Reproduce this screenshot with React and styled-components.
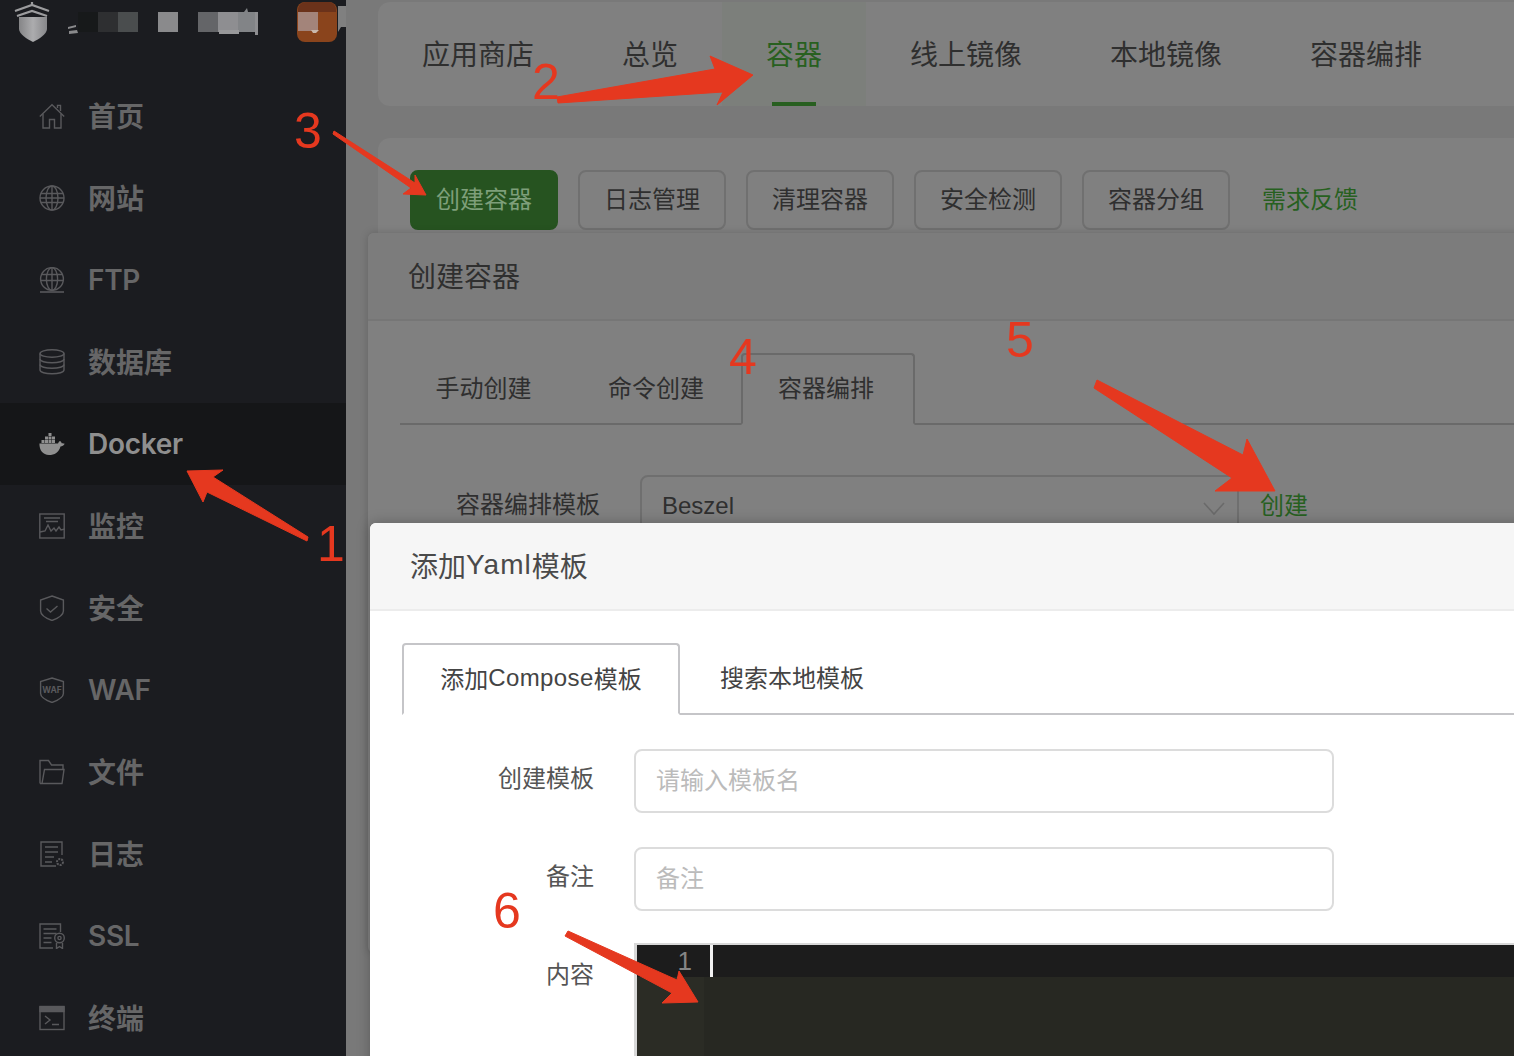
import React from 'react';
import styled, { createGlobalStyle } from 'styled-components';

const GlobalStyle = createGlobalStyle`
  html, body { margin: 0; padding: 0; background: #797979; }
  * { box-sizing: border-box; }
  body { font-family: "Liberation Sans", "Noto Sans CJK SC", sans-serif; }
`;

const Page = styled.div`
  position: relative;
  display: flex;
  width: 1514px;
  height: 1056px;
  overflow: hidden;
`;

/* ---------- sidebar ---------- */
const Sidebar = styled.aside`
  width: 346px;
  flex: none;
  background: #1b1c20;
`;

const Brand = styled.div`
  height: 75px;
  display: flex;
  align-items: flex-start;
`;

const MenuItem = styled.div`
  height: 82px;
  display: flex;
  align-items: center;
  padding-left: 39px;
  gap: 23px;
  font-family: Inter, "Noto Sans CJK SC", sans-serif;
  font-size: 28px;
  font-weight: 600;
  color: ${p => (p.$active ? '#8f8f8f' : '#666667')};
  background: ${p => (p.$active ? '#151618' : 'transparent')};
`;

const MenuLabel = styled.span`
  padding-bottom: ${p => (p.$latin ? 0 : 2)}px;
  letter-spacing: ${p => (p.$latin ? -0.3 : 0)}px;
`;

const MenuIcon = styled.svg`
  width: 26px;
  height: 26px;
  flex: none;
  fill: none;
  stroke: ${p => (p.$active ? '#8f8f8f' : '#59595c')};
  stroke-width: 1.4;
`;

/* ---------- page behind the dialogs ---------- */
const Main = styled.main`
  position: relative;
  flex: 1;
  min-width: 0;
  padding: 2px 0 0 32px;
  background: #797979;
  color: #2f2f2f;
`;

const Card = styled.div`
  display: flex;
  align-items: ${p => p.$align || 'stretch'};
  height: ${p => p.$height}px;
  margin-right: -20px;
  border-radius: 12px;
  background: #808080;
`;

const SecondCard = styled(Card)`
  margin-top: 32px;
  padding: 32px 0 0 32px;
  gap: 20px;
`;

const TopTab = styled.div`
  position: relative;
  display: flex;
  align-items: center;
  flex: none;
  padding: 0 44px 2px;
  height: 104px;
  font-size: 28px;
  white-space: nowrap;
  color: ${p => (p.$active ? '#28601f' : '#2f2f2f')};
  background: ${p => (p.$active ? '#7c7f7b' : 'transparent')};

  ${p => p.$active && `
    &::after {
      content: "";
      position: absolute;
      left: 50%;
      bottom: 0;
      width: 44px;
      height: 4px;
      margin-left: -22px;
      background: #285f20;
    }
  `}
`;

const ActionButton = styled.div`
  width: 148px;
  height: 60px;
  padding-bottom: 6px;
  display: flex;
  align-items: center;
  justify-content: center;
  font-size: 24px;
  border-radius: 8px;
  border: 2px solid ${p => (p.$primary ? '#265320' : '#707070')};
  background: ${p => (p.$primary ? '#265320' : 'transparent')};
  color: ${p => (p.$primary ? '#7e9f7a' : '#2f2f2f')};
`;

const FeedbackLink = styled.div`
  height: 60px;
  margin-left: 12px;
  padding-bottom: 6px;
  display: flex;
  align-items: center;
  font-size: 24px;
  color: #27601f;
`;

/* ---------- create container dialog ---------- */
const Dialog = styled.section`
  position: absolute;
  left: 22px;
  top: 233px;
  width: 1200px;
  height: 720px;
  border-radius: 6px 0 0 6px;
  background: #808080;
  box-shadow: 0 0 8px rgba(0, 0, 0, 0.18);
`;

const DialogHeader = styled.div`
  height: 88px;
  display: flex;
  align-items: center;
  padding: 0 0 2px 40px;
  font-size: 28px;
  background: #7c7c7c;
  border-bottom: 2px solid #767676;
  border-radius: 6px 0 0 0;
`;

const DarkTabs = styled.div`
  display: flex;
  height: 72px;
  margin: 32px 0 0 32px;
  border-bottom: 2px solid #6a6a6a;
`;

const DarkTab = styled.div`
  display: flex;
  align-items: center;
  justify-content: center;
  width: ${p => p.$width}px;
  height: 72px;
  font-size: 24px;
  padding: 0 ${p => p.$right || 0}px 6px ${p => p.$left || 0}px;
  ${p => p.$active && `
    border: 2px solid #6a6a6a;
    border-bottom: 2px solid #808080;
    border-radius: 4px 4px 0 0;
  `}
`;

const TemplateRow = styled.div`
  display: flex;
  margin-top: 50px;
  font-size: 24px;
`;

const TemplateLabel = styled.div`
  width: 232px;
  padding-top: 10px;
  text-align: right;
`;

const TemplateSelect = styled.div`
  width: 599px;
  height: 64px;
  margin-left: 40px;
  padding: 15px 0 0 20px;
  display: flex;
  justify-content: space-between;
  border: 2px solid #6f6f6f;
  border-radius: 8px 0 0 8px;
`;

const Chevron = styled.svg`
  width: 22px;
  height: 14px;
  margin: 10px 12px 0 0;
  fill: none;
  stroke: #6a6a6a;
  stroke-width: 1.6;
`;

const CreateLink = styled.div`
  margin-left: 21px;
  padding-top: 11px;
  color: #27601f;
`;

/* ---------- yaml template modal ---------- */
const Modal = styled.section`
  position: absolute;
  left: 24px;
  top: 523px;
  width: 1200px;
  height: 600px;
  background: #fff;
  border-radius: 6px 0 0 0;
  color: #555;
  box-shadow: 0 0 14px rgba(0, 0, 0, 0.25);
`;

const ModalHeader = styled.div`
  height: 88px;
  display: flex;
  align-items: center;
  padding: 0 0 3px 40px;
  font-size: 28px;
  color: #4a4a4a;
  background: #f6f6f6;
  border-bottom: 2px solid #ececec;
  border-radius: 6px 0 0 0;
`;

const Latin = styled.span`
  letter-spacing: ${p => p.$spacing}px;
`;

const ModalTabs = styled.div`
  display: flex;
  height: 72px;
  margin: 32px 0 0 32px;
  border-bottom: 2px solid #c5c5c8;
`;

const ModalTab = styled.div`
  display: flex;
  align-items: center;
  height: 72px;
  padding: 0 40px 6px;
  font-size: 24px;
  color: #444;
  white-space: nowrap;
  ${p => p.$active && `
    width: 278px;
    padding: 0 36px 3px;
    justify-content: center;
    border: 2px solid #c5c5c8;
    border-bottom: 2px solid #fff;
    border-radius: 4px 4px 0 0;
  `}
`;

const FormRow = styled.div`
  display: flex;
  margin-top: ${p => p.$top}px;
  font-size: 24px;
`;

const FormLabel = styled.div`
  width: 224px;
  padding-top: 10px;
  text-align: right;
  color: #555;
`;

const EditorLabel = styled(FormLabel)`
  padding-top: 12px;
`;

const TextInput = styled.div`
  width: 700px;
  height: 64px;
  margin-left: 40px;
  padding: 10px 0 0 20px;
  border: 2px solid #dcdcdc;
  border-radius: 8px;
  color: #bbb;
`;

const Editor = styled.div`
  display: grid;
  grid-template-columns: 67px 1fr;
  grid-template-rows: 32px 1fr;
  width: 900px;
  height: 113px;
  margin-left: 40px;
  border-top: 2px solid #d8d8d8;
  border-left: 3px solid #d8d8d8;
  background: #272822;
`;

const ActiveGutter = styled.div`
  padding-right: 12px;
  text-align: right;
  font-size: 26px;
  line-height: 32px;
  color: #858585;
  background: #1c1c1c;
`;

const ActiveLine = styled.div`
  background: #1c1c1c;
  padding-left: 6px;

  &::before {
    content: "";
    display: block;
    width: 3px;
    height: 32px;
    background: #f2f2f2;
  }
`;

const Gutter = styled.div`
  background: #2b2c25;
`;

const EditorBody = styled.div`
  background: #272822;
`;

/* ---------- red annotations on top of the screenshot ---------- */
const ArrowLayer = styled.svg`
  position: absolute;
  left: 0;
  top: 0;
  width: 1514px;
  height: 1056px;
  fill: #e5381f;
  stroke: #e5381f;
  stroke-width: 1;
  stroke-linejoin: round;
  pointer-events: none;
`;

const Digit = styled.span`
  position: absolute;
  left: ${p => p.$x}px;
  top: ${p => p.$y}px;
  font-size: 50px;
  line-height: 50px;
  color: #e5381f;
  font-weight: 400;
`;

const Icon = ({ active, children }) => (
  <MenuIcon viewBox="0 0 26 26" $active={active}>{children}</MenuIcon>
);

const icons = {
  home: (
    <>
      <path d="M0.8 13.5 13 1.8l12.2 11.7" />
      <path d="M18.5 5V2.4h3V8" />
      <path d="M4 11v14h6.5v-8.5h5V25H22V11" />
    </>
  ),
  globe: (
    <>
      <circle cx="13" cy="13" r="12" />
      <ellipse cx="13" cy="13" rx="6" ry="12" />
      <path d="M13 1v24M2 8.5h22M1 13h24M2 17.5h22" />
    </>
  ),
  ftp: (
    <>
      <circle cx="13" cy="12" r="11.4" />
      <ellipse cx="13" cy="12" rx="5.6" ry="11.4" />
      <path d="M13 1v22M2.6 7.5h20.8M1.6 13.5h22.8" />
      <path d="M1 25h24" strokeWidth="1.6" />
    </>
  ),
  db: (
    <>
      <ellipse cx="13" cy="4.5" rx="12" ry="3.8" />
      <path d="M1 4.5v16.5c0 2.2 5.4 3.8 12 3.8s12-1.6 12-3.8V4.5" />
      <path d="M1 10c0 2.2 5.4 3.8 12 3.8S25 12.2 25 10" />
      <path d="M1 15.5c0 2.2 5.4 3.8 12 3.8s12-1.6 12-3.8" />
    </>
  ),
  docker: (
    <g fill="#8f8f8f" stroke="none">
      <path d="M0.4 12.6h18.6c0.6-2 1.9-2.7 2.1-2.6 0.9 0.6 1.4 1.5 1.6 2.2 1.1-0.2 2.2 0 3 0.6-1 1.9-2.6 2.6-4.2 2.6C20 21.200 15.500 24 10 24 3.800 24 0.400 19.500 0.400 12.600z" />
      <path d="M2.500 9h3v3h-3zM6 9h3v3H6zM9.500 9h3v3h-3zM13 9h3v3h-3zM6 5.500h3v3H6zM9.500 5.500h3v3h-3zM13 5.500h3v3h-3zM9.500 2h3v3h-3z" />
    </g>
  ),
  monitor: (
    <>
      <rect x="0.800" y="1" width="24.400" height="24" />
      <path d="M5 5h16M7 8.500h12" />
      <path d="M1 19l5-1 3-6 3 6 3-3 2 3 3-4 2 3 4-1" />
    </>
  ),
  shield: (
    <>
      <path d="M13 1 24.400 5v11c0 3.800-6 7.500-11.400 9.500C7.600 23.500 1.600 19.800 1.600 16V5z" />
      <path d="M7.500 13.500l4 3.500 7-6" />
    </>
  ),
  waf: (
    <>
      <path d="M13 1 24.400 4.500v12c0 3.500-6 7-11.400 9C7.600 23.500 1.600 20 1.600 16.500v-12z" />
      <text x="13" y="16" textAnchor="middle" fontSize="8.500" fontWeight="700" fill="#59595c" stroke="none">WAF</text>
    </>
  ),
  folder: (
    <>
      <path d="M1 24.500V1.500h8.500l3 4.500h11.500v4" />
      <path d="M1 24.500h22l2-14H5.500L3 24.500" />
    </>
  ),
  logs: (
    <>
      <path d="M23 14V1H2v24h15" />
      <path d="M6 6h13M6 11h13M6 16h9M6 21h7" />
      <circle cx="21" cy="21" r="3" strokeDasharray="2 1" strokeWidth="2" />
    </>
  ),
  ssl: (
    <>
      <path d="M21.500 9V1H1v24h13" />
      <path d="M4.500 6h13M4.500 10.500h13M4.500 15h8M4.500 19.500h8" />
      <circle cx="20.500" cy="15" r="4.800" />
      <circle cx="20.500" cy="15" r="1.600" />
      <path d="M17.500 20v5.500l3-2 3 2V20" />
    </>
  ),
  terminal: (
    <>
      <rect x="1" y="1.500" width="24" height="23" />
      <path d="M1 2h24v4.500H1z" fill="#59595c" />
      <path d="M6 11l5 4-5 4M13 19.500h7" />
    </>
  ),
};

const menu = [
  { icon: 'home', label: '首页' },
  { icon: 'globe', label: '网站' },
  { icon: 'ftp', label: 'FTP', latin: true },
  { icon: 'db', label: '数据库' },
  { icon: 'docker', label: 'Docker', latin: true, active: true },
  { icon: 'monitor', label: '监控' },
  { icon: 'shield', label: '安全' },
  { icon: 'waf', label: 'WAF', latin: true },
  { icon: 'folder', label: '文件' },
  { icon: 'logs', label: '日志' },
  { icon: 'ssl', label: 'SSL', latin: true },
  { icon: 'terminal', label: '终端' },
];

const topTabs = ['应用商店', '总览', '容器', '线上镜像', '本地镜像', '容器编排', '日志'];
const actions = ['创建容器', '日志管理', '清理容器', '安全检测', '容器分组'];

const LogoArea = () => (
  <svg width="346" height="50" viewBox="0 0 346 50">
    <defs>
      <linearGradient id="shieldFill" x1="0" x2="1" y1="0" y2="0">
        <stop offset="0" stopColor="#858587" />
        <stop offset="0.5" stopColor="#acacae" />
        <stop offset="1" stopColor="#87878a" />
      </linearGradient>
    </defs>
    {/* logo */}
    <path d="M19 17h28v12c0 5-8 10-14 13-6-3-14-8-14-13z" fill="url(#shieldFill)" />
    <path d="M18 17l6-2h3v-3h3v2h6v-2h3v3h3l6 2z" fill="#1b1c20" />
    <path d="M32 2v4M15 11 32 5l17 6M17 16l15-5 15 5" stroke="#9c9c9e" strokeWidth="2.200" fill="none" />
    {/* blurred title */}
    <path d="M68 27l8-2v2l-8 2zM69 31l8-1 1 3-9 1z" fill="#8a8a8c" />
    <rect x="78" y="12" width="20" height="20" fill="#17191a" />
    <rect x="98" y="12" width="20" height="20" fill="#2e2f31" />
    <rect x="118" y="12" width="20" height="20" fill="#4a4d4e" />
    <rect x="158" y="12" width="20" height="20" fill="#8a8a8c" />
    <rect x="198" y="12" width="20" height="20" fill="#646568" />
    <rect x="218" y="12" width="20" height="20" fill="#8e8e91" />
    <rect x="238" y="12" width="18" height="20" fill="#828487" />
    <rect x="219" y="30" width="20" height="4" fill="#98989a" />
    <rect x="255" y="12" width="3" height="23" fill="#8e8e91" />
    <path d="M244 12l3-4 1 4z" fill="#828487" />
    {/* avatar */}
    <path d="M338 6h8v21h-5l-3 5z" fill="#808080" />
    <rect x="297" y="2" width="40" height="40" rx="8" fill="#8a441c" />
    <path d="M298 10c0-4 3-8 8-8h23c4 0 7 4 7 8v2h-38z" fill="#6b321a" />
    <rect x="298" y="12" width="20" height="19" fill="#a3847a" />
    <path d="M311 30h8l-3 3h-3z" fill="#c9b8ac" />
  </svg>
);

const App = () => (
  <Page>
    <GlobalStyle />
    <Sidebar>
      <Brand><LogoArea /></Brand>
      {menu.map(({ icon, label, latin, active }) => (
        <MenuItem key={label} $active={active}>
          <Icon active={active}>{icons[icon]}</Icon>
          <MenuLabel $latin={latin}>{label}</MenuLabel>
        </MenuItem>
      ))}
    </Sidebar>

    <Main>
      <Card $height={104}>
        {topTabs.map(t => <TopTab key={t} $active={t === '容器'}>{t}</TopTab>)}
      </Card>
      <SecondCard $height={130} $align="flex-start">
        {actions.map((a, i) => <ActionButton key={a} $primary={i === 0}>{a}</ActionButton>)}
        <FeedbackLink>需求反馈</FeedbackLink>
      </SecondCard>

      <Dialog>
        <DialogHeader>创建容器</DialogHeader>
        <DarkTabs>
          <DarkTab $width={169} $right={2}>手动创建</DarkTab>
          <DarkTab $width={172} $left={2}>命令创建</DarkTab>
          <DarkTab $width={174} $right={4} $active>容器编排</DarkTab>
        </DarkTabs>
        <TemplateRow>
          <TemplateLabel>容器编排模板</TemplateLabel>
          <TemplateSelect>
            Beszel
            <Chevron viewBox="0 0 22 14"><path d="M1 1l10 11L21 1" /></Chevron>
          </TemplateSelect>
          <CreateLink>创建</CreateLink>
        </TemplateRow>
      </Dialog>

      <Modal>
        <ModalHeader>添加<Latin $spacing={1}>Yaml</Latin>模板</ModalHeader>
        <ModalTabs>
          <ModalTab $active>添加<Latin $spacing={0.4}>Compose</Latin>模板</ModalTab>
          <ModalTab>搜索本地模板</ModalTab>
        </ModalTabs>
        <FormRow $top={34}>
          <FormLabel>创建模板</FormLabel>
          <TextInput>请输入模板名</TextInput>
        </FormRow>
        <FormRow $top={34}>
          <FormLabel>备注</FormLabel>
          <TextInput>备注</TextInput>
        </FormRow>
        <FormRow $top={32}>
          <EditorLabel>内容</EditorLabel>
          <Editor>
            <ActiveGutter>1</ActiveGutter>
            <ActiveLine />
            <Gutter />
            <EditorBody />
          </Editor>
        </FormRow>
      </Modal>
    </Main>

    <ArrowLayer viewBox="0 0 1514 1056">
      <polygon points="187,471 223,470 213,477 308,537 307,541 207,492 203,502" />
      <polygon points="753,75 717,105 723,92 558,103 557,97 715,69 710,56" />
      <polygon points="426,195 403,194 411,188 333,134 334,131 415,183 415,175" />
      <polygon points="1275,491 1215,491 1232,478 1094,388 1097,380 1243,455 1247,439" />
      <polygon points="698,1002 662,1003 672,993 565,936 568,931 677,980 679,971" />
    </ArrowLayer>
    <Digit $x={317} $y={519}>1</Digit>
    <Digit $x={532} $y={57}>2</Digit>
    <Digit $x={294} $y={106}>3</Digit>
    <Digit $x={729} $y={332}>4</Digit>
    <Digit $x={1006} $y={315}>5</Digit>
    <Digit $x={493} $y={886}>6</Digit>
  </Page>
);

export default App;
